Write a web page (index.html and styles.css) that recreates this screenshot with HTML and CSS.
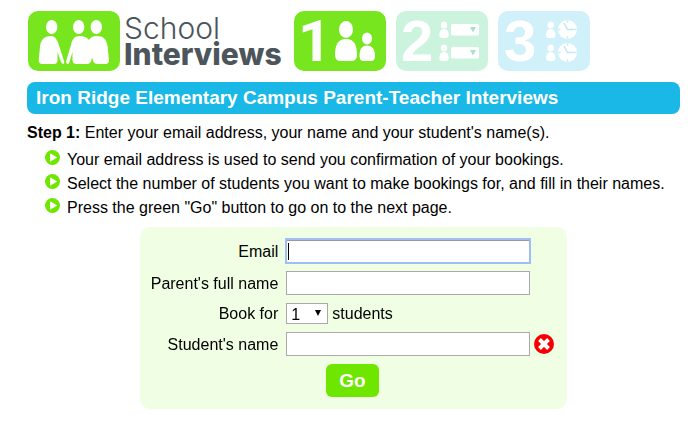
FILE: index.html
```html
<!DOCTYPE html>
<html lang="en">
<head>
  <meta charset="UTF-8">
  <meta name="viewport" content="width=device-width, initial-scale=1.0">
  <title>School Interviews</title>
  <link rel="stylesheet" href="styles.css">
</head>
<body>

  <header class="header">
    <a class="logo" href="#">
      <svg class="tile" viewBox="0 0 92 60" aria-hidden="true">
        <rect width="92" height="60" rx="10" fill="#78e61e"/>
        <g fill="#fff">
          <ellipse cx="23.7" cy="16" rx="5.7" ry="7"/>
          <path d="M23 25C15 25 12.5 30 12 36L10.7 49Q10.5 53 14.5 53H26Q29.5 53 29.5 49V41L33 51Q34 53.5 36 52.5Q36.6 52 36 50L30.5 33Q28 25 23 25Z"/>
          <ellipse cx="50.7" cy="16" rx="5.7" ry="7"/>
          <path d="M51.5 25C46 25 44 29 43 34L38.2 50Q37.7 52.5 39.5 53Q41 53 41.5 51L44.5 41V49Q44.5 53 48.5 53H59Q62.5 53 63.5 49L64 46L65.5 51Q66.5 53 70 53H77Q81.2 53 81 49L79.5 35C78.5 28 75 25 69 25C65 25 62.5 26.5 61 29C59 26.5 56 25 51.5 25Z"/>
          <ellipse cx="68.3" cy="16" rx="5.7" ry="7"/>
        </g>
      </svg>
      <span class="logo-text">
        <span class="logo-school">School</span>
        <span class="logo-interviews">Interviews</span>
      </span>
    </a>

    <svg class="tile" viewBox="0 0 92 60" role="img" aria-label="Step 1">
      <rect width="92" height="60" rx="10" fill="#78e61e"/>
      <text class="digit digit-one" x="4" y="50">1</text>
      <g fill="#fff">
        <ellipse cx="52" cy="18.5" rx="7" ry="8.5"/>
        <path d="M41 44C41 34 44 28 52 28S63 34 63 44Q63 50 57 50H47Q41 50 41 44Z"/>
        <ellipse cx="73" cy="27.5" rx="5" ry="6"/>
        <path d="M65.5 45C65.5 38 68 34.5 73 34.5S81 38 81 45Q81 50 77 50H69.5Q65.5 50 65.5 45Z"/>
      </g>
    </svg>

    <svg class="tile" viewBox="0 0 92 60" role="img" aria-label="Step 2">
      <rect width="92" height="60" rx="10" fill="#ccf3de"/>
      <text class="digit" x="5" y="50">2</text>
      <g id="row2">
        <g id="person" fill="#fff">
          <ellipse cx="48" cy="14" rx="3.2" ry="3.5"/>
          <path d="M43.3 24Q43.3 18 48 18T52.7 24Q52.7 27 50 27H46Q43.3 27 43.3 24Z"/>
        </g>
        <rect x="55" y="13" width="28" height="11.5" rx="1.5" fill="#fff"/>
        <path d="M74 16H80L77 21.5Z" fill="#a9e2c4"/>
      </g>
      <use href="#row2" y="23"/>
    </svg>

    <svg class="tile" viewBox="0 0 92 60" role="img" aria-label="Step 3">
      <rect width="92" height="60" rx="10" fill="#d0f0fa"/>
      <text class="digit" x="6" y="50">3</text>
      <g id="row3">
        <use href="#person" x="4.7"/>
        <circle cx="69.5" cy="18.5" r="9.5" fill="#fff"/>
        <path d="M66 12L69.5 18.5H76M69.5 9.5V11.5M69.5 25.5V27.5M60.5 18.5H62.5M76.5 18.5H78.5" fill="none" stroke="#bfe8f5" stroke-width="1.5"/>
      </g>
      <use href="#row3" y="23"/>
    </svg>
  </header>

  <h1>Iron Ridge Elementary Campus Parent-Teacher Interviews</h1>

  <p class="step"><b>Step 1:</b> Enter your email address, your name and your student's name(s).</p>

  <ul class="tips">
    <li>
      <svg class="bullet" viewBox="0 0 15 15" aria-hidden="true"><circle cx="7.5" cy="7.5" r="7.5" fill="#6ee600"/><path d="M5 3.3L12.3 7.5L5 11.7Z" fill="#fff"/></svg>
      Your email address is used to send you confirmation of your bookings.
    </li>
    <li>
      <svg class="bullet" viewBox="0 0 15 15" aria-hidden="true"><circle cx="7.5" cy="7.5" r="7.5" fill="#6ee600"/><path d="M5 3.3L12.3 7.5L5 11.7Z" fill="#fff"/></svg>
      Select the number of students you want to make bookings for, and fill in their names.
    </li>
    <li>
      <svg class="bullet" viewBox="0 0 15 15" aria-hidden="true"><circle cx="7.5" cy="7.5" r="7.5" fill="#6ee600"/><path d="M5 3.3L12.3 7.5L5 11.7Z" fill="#fff"/></svg>
      Press the green "Go" button to go on to the next page.
    </li>
  </ul>

  <form class="booking">
    <label for="email">Email</label>
    <div class="field"><input type="text" id="email" autofocus></div>

    <label for="parent">Parent's full name</label>
    <div class="field"><input type="text" id="parent"></div>

    <label for="count">Book for</label>
    <div class="field">
      <span class="select">
        <select id="count">
          <option>1</option>
          <option>2</option>
          <option>3</option>
          <option>4</option>
        </select>
        <svg class="arrow" viewBox="0 0 6 6" aria-hidden="true"><path d="M0 0H6L3 6Z"/></svg>
      </span>
      <span>students</span>
    </div>

    <label for="student">Student's name</label>
    <div class="field">
      <input type="text" id="student">
      <button type="button" class="remove" aria-label="Remove student">
        <svg viewBox="0 0 20 20" aria-hidden="true"><circle cx="10" cy="10" r="10" fill="#f50000"/><path d="M5.5 5.5L14.5 14.5M14.5 5.5L5.5 14.5" stroke="#fff" stroke-width="4"/></svg>
      </button>
    </div>

    <button type="submit" class="go">Go</button>
  </form>

</body>
</html>
```
FILE: styles.css
```css
body {
  font-family: Arial, "Liberation Sans", sans-serif;
  font-size: 16px;
  line-height: 24px;
  color: #000;
  background: #fff;
  margin: 0;
  padding: 11px 20px 16px 27px;
}

.header {
  display: flex;
  gap: 10px;
  padding-left: 1px;
}

.logo {
  display: flex;
  gap: 4px;
  margin-right: 2px;
  color: #4c555b;
  text-decoration: none;
}

.tile {
  display: block;
  width: 92px;
  height: 60px;
  overflow: visible;
}

.digit {
  font-family: Arial, "Liberation Sans", sans-serif;
  font-size: 58px;
  font-weight: bold;
  fill: #fff;
}

.digit-one {
  font-family: Roboto, sans-serif;
}

.logo-text {
  display: flex;
  flex-direction: column;
  padding-top: 4px;
}

.logo-school,
.logo-interviews {
  font-family: Inter, sans-serif;
  font-size: 30px;
  line-height: 26px;
}

.logo-school {
  font-weight: 300;
}

.logo-interviews {
  font-weight: 800;
}

h1 {
  margin: 11px 0 7px;
  padding: 0 9px;
  font-size: 19px;
  line-height: 32px;
  color: #fff;
  background: #19b8e6;
  border-radius: 8px;
}

.step {
  margin: 0;
}

.tips {
  list-style: none;
  margin: 3px 0 7px;
  padding: 0 0 0 18px;
}

.tips li {
  display: flex;
  gap: 7px;
}

.bullet {
  flex: none;
  width: 15px;
  height: 15px;
  margin-top: 2px;
}

.booking {
  display: grid;
  grid-template-columns: auto auto;
  gap: 8px;
  align-items: center;
  width: fit-content;
  margin: 0 auto;
  padding: 12px 13px 12px 11px;
  background: #f0ffe4;
  border-radius: 10px;
}

.booking label {
  text-align: right;
  line-height: 21px;
}

.field {
  display: flex;
  align-items: center;
  gap: 4px;
  line-height: 21px;
  padding-right: 24px;
}

.field:has(.remove) {
  padding-right: 0;
}

.field input {
  box-sizing: border-box;
  width: 244px;
  height: 24px;
  padding: 1px 2px;
  border: 1px solid #a9a9a9;
  border-radius: 0;
  background: #fff;
  font: inherit;
}

.field input:focus {
  outline: 2px solid #9dbff5;
  outline-offset: -1px;
  box-shadow: inset 0 1px #999;
  background: #fff linear-gradient(#000, #000) 1px center / 1px 17px no-repeat;
}

.select {
  position: relative;
}

.select select {
  display: block;
  appearance: none;
  box-sizing: border-box;
  width: 42px;
  height: 21px;
  padding: 0 4px;
  border: 1px solid #a9a9a9;
  border-radius: 0;
  background: #fff;
  color: #000;
  font: inherit;
}

.arrow {
  position: absolute;
  top: 7px;
  right: 7px;
  width: 6px;
  height: 6px;
  pointer-events: none;
}

.remove {
  width: 20px;
  height: 20px;
  padding: 0;
  border: 0;
  background: none;
  cursor: pointer;
}

.remove svg {
  display: block;
}

.go {
  grid-column: 1 / -1;
  justify-self: center;
  padding: 0 13px;
  border: 0;
  border-radius: 6px;
  background: #6ee600;
  color: #fff;
  font-family: inherit;
  font-size: 19px;
  font-weight: bold;
  line-height: 33px;
  cursor: pointer;
}
```
